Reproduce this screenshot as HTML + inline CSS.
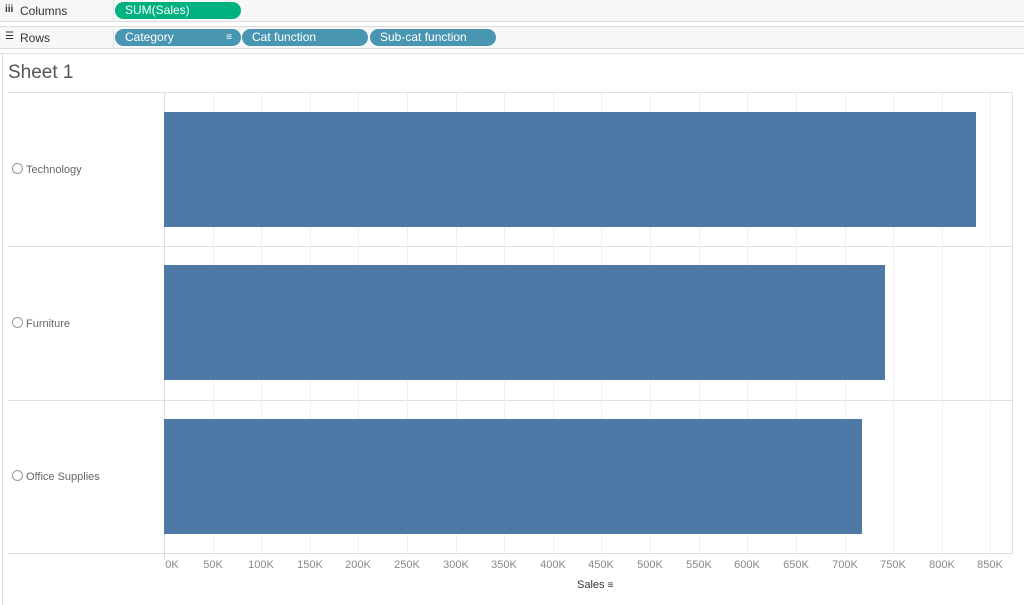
<!DOCTYPE html><html><head><style>
body{margin:0;width:1024px;height:605px;background:#fff;font-family:"Liberation Sans",sans-serif;position:relative;overflow:hidden}
.a{position:absolute}
.shelf{position:absolute;left:0;width:1024px;height:21px;background:#f7f7f7;border-bottom:1px solid #ddd}
.lbl{position:absolute;left:20px;top:4px;font-size:12px;color:#333}
.pill{position:absolute;top:2px;height:17px;border-radius:9px;color:#fff;font-size:12px;line-height:17px;padding-left:10px;box-sizing:border-box}
.tk{position:absolute;top:559px;font-size:11px;color:#888;transform:translateX(-50%)}
.g{position:absolute;top:93px;width:1px;height:460px;background:#f0f0f0}
.row{position:absolute;left:12px;font-size:11px;color:#666}
.row:before{content:"";display:inline-block;width:9px;height:9px;border:1px solid #999;border-radius:50%;margin-right:3px;vertical-align:-1px}
</style></head><body>
<div class="shelf" style="top:0"><div class="a" style="left:113px;top:0;width:1px;height:21px;background:#e2e2e2"></div><span class="lbl" style="left:5px;font-weight:bold;font-size:10px">iii</span><span class="lbl">Columns</span>
<div class="pill" style="left:115px;width:126px;background:#00b180">SUM(Sales)</div></div>
<div class="shelf" style="top:26px;border-top:1px solid #ddd"><div class="a" style="left:113px;top:0;width:1px;height:21px;background:#e2e2e2"></div><span class="lbl" style="left:5px;font-size:10px">☰</span><span class="lbl">Rows</span>
<div class="pill" style="left:115px;width:126px;background:#4996b2">Category<span class="a" style="right:9px;top:0;font-size:10px">≡</span></div>
<div class="pill" style="left:242px;width:126px;background:#4996b2">Cat function</div>
<div class="pill" style="left:370px;width:126px;background:#4996b2">Sub-cat function</div></div>
<div class="a" style="left:0;top:53px;width:1024px;height:1px;background:#ddd"></div>
<div class="a" style="left:2px;top:54px;width:1px;height:551px;background:#ddd"></div>
<div class="a" style="left:8px;top:62px;font-size:19px;color:#555">Sheet 1</div>
<div class="a" style="left:8px;top:92px;width:1005px;height:1px;background:#e0e0e0"></div>
<div class="a" style="left:8px;top:246px;width:1005px;height:1px;background:#e0e0e0"></div>
<div class="a" style="left:8px;top:400px;width:1005px;height:1px;background:#e0e0e0"></div>
<div class="a" style="left:8px;top:553px;width:1005px;height:1px;background:#ddd"></div>
<div class="a" style="left:1012px;top:92px;width:1px;height:462px;background:#e0e0e0"></div>
<div class="g" style="left:213px"></div><div class="g" style="left:261px"></div><div class="g" style="left:310px"></div><div class="g" style="left:358px"></div><div class="g" style="left:407px"></div><div class="g" style="left:456px"></div><div class="g" style="left:504px"></div><div class="g" style="left:553px"></div><div class="g" style="left:601px"></div><div class="g" style="left:650px"></div><div class="g" style="left:699px"></div><div class="g" style="left:747px"></div><div class="g" style="left:796px"></div><div class="g" style="left:845px"></div><div class="g" style="left:893px"></div><div class="g" style="left:942px"></div><div class="g" style="left:990px"></div>
<div class="a" style="left:164px;top:93px;width:1px;height:467px;background:#ddd"></div>
<div class="a" style="left:164px;top:112px;width:812px;height:115px;background:#4e79a7"></div>
<div class="a" style="left:164px;top:265px;width:721px;height:115px;background:#4e79a7"></div>
<div class="a" style="left:164px;top:419px;width:698px;height:115px;background:#4e79a7"></div>
<div class="row" style="top:163px">Technology</div>
<div class="row" style="top:317px">Furniture</div>
<div class="row" style="top:470px">Office Supplies</div>
<div class="tk" style="left:172px">0K</div><div class="tk" style="left:213px">50K</div><div class="tk" style="left:261px">100K</div><div class="tk" style="left:310px">150K</div><div class="tk" style="left:358px">200K</div><div class="tk" style="left:407px">250K</div><div class="tk" style="left:456px">300K</div><div class="tk" style="left:504px">350K</div><div class="tk" style="left:553px">400K</div><div class="tk" style="left:601px">450K</div><div class="tk" style="left:650px">500K</div><div class="tk" style="left:699px">550K</div><div class="tk" style="left:747px">600K</div><div class="tk" style="left:796px">650K</div><div class="tk" style="left:845px">700K</div><div class="tk" style="left:893px">750K</div><div class="tk" style="left:942px">800K</div><div class="tk" style="left:990px">850K</div>
<div class="a" style="left:577px;top:579px;font-size:11px;color:#333">Sales <span style="font-size:10px">≡</span></div>
</body></html>
